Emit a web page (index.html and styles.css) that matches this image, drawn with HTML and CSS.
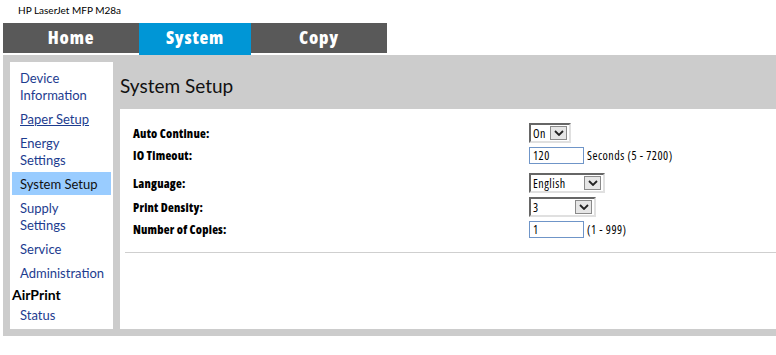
FILE: index.html
```html
<!DOCTYPE html>
<html lang="en">
<head>
<meta charset="utf-8">
<title>System Setup</title>
<link rel="stylesheet" href="styles.css">
</head>
<body>
<div class="title">HP LaserJet MFP M28a</div>
<nav class="tabs">
  <a class="tab">Home</a>
  <a class="tab active">System</a>
  <a class="tab">Copy</a>
</nav>
<div class="panel">
  <aside class="sidebar">
    <a class="item">Device Information</a>
    <a class="item underline">Paper Setup</a>
    <a class="item">Energy Settings</a>
    <a class="item selected">System Setup</a>
    <a class="item">Supply Settings</a>
    <a class="item">Service</a>
    <a class="item">Administration</a>
    <div class="group">AirPrint</div>
    <a class="item">Status</a>
  </aside>
  <main class="content">
    <h1 class="heading">System Setup</h1>
    <section class="card">
      <div class="form">
        <div class="row">
          <span class="label">Auto Continue:</span>
          <span class="field"><span class="select w-on"><span class="val">On</span><span class="arrow"><svg width="10" height="6" viewBox="0 0 10 6"><path d="M1 1 L5 5 L9 1" fill="none" stroke="#222" stroke-width="1.8"/></svg></span></span></span>
        </div>
        <div class="row">
          <span class="label">IO Timeout:</span>
          <span class="field"><span class="input">120</span><span class="hint">Seconds (5 - 7200)</span></span>
        </div>
        <div class="row gap">
          <span class="label">Language:</span>
          <span class="field"><span class="select w-lang"><span class="val">English</span><span class="arrow"><svg width="10" height="6" viewBox="0 0 10 6"><path d="M1 1 L5 5 L9 1" fill="none" stroke="#222" stroke-width="1.8"/></svg></span></span></span>
        </div>
        <div class="row">
          <span class="label">Print Density:</span>
          <span class="field"><span class="select w-dens"><span class="val">3</span><span class="arrow"><svg width="10" height="6" viewBox="0 0 10 6"><path d="M1 1 L5 5 L9 1" fill="none" stroke="#222" stroke-width="1.8"/></svg></span></span></span>
        </div>
        <div class="row">
          <span class="label">Number of Copies:</span>
          <span class="field"><span class="input">1</span><span class="hint">(1 - 999)</span></span>
        </div>
      </div>
      <hr class="rule">
    </section>
  </main>
</div>
</body>
</html>
```
FILE: styles.css
```css
* { box-sizing: border-box; }
html, body { margin: 0; padding: 0; background: #fff; }
body { font-family: Lato, "Open Sans", sans-serif; color: #000; width: 776px; overflow: hidden; }

.title {
  height: 23px;
  padding-left: 18px;
  font-size: 10px;
  line-height: 21px;
}

.tabs {
  display: flex;
  align-items: flex-start;
  margin-left: 3px;
  height: 32px;
}
.tab {
  display: block;
  width: 136px;
  height: 30px;
  line-height: 29px;
  text-align: center;
  background: #595959;
  color: #fff;
  font-family: "Open Sans", sans-serif;
  font-weight: 800;
  font-size: 18px;
  font-stretch: 75%;
  letter-spacing: 0.8px;
}
.tab.active {
  width: 112px;
  height: 32px;
  background: #0096d6;
}

.panel {
  display: flex;
  gap: 7px;
  margin-left: 3px;
  background: #cccccc;
  padding: 7px 0 7px 7px;
}

.sidebar {
  width: 103px;
  flex: none;
  background: #fff;
  padding: 4px 2px 3px;
  display: flex;
  flex-direction: column;
  gap: 1px;
}
.item {
  display: block;
  padding: 4px 8px 2px 8px;
  line-height: 17px;
  font-size: 13px;
  color: #1d3c8f;
}
.item.underline { text-decoration: underline; }
.item.selected { background: #99ccff; color: #111; }
.group {
  font-weight: bold;
  font-size: 14px;
  line-height: 17px;
  padding-top: 1px;
  margin-bottom: -1px;
  color: #000;
}

.content {
  flex: 1;
  display: flex;
  flex-direction: column;
}
.heading {
  margin: 0;
  height: 47px;
  line-height: 47px;
  font-size: 19px;
  font-weight: normal;
  color: #111;
}
.card {
  flex: 1;
  background: #fff;
  padding-top: 14px;
}
.form {
  display: flex;
  flex-direction: column;
  gap: 4px;
  padding-left: 13px;
}
.row {
  display: grid;
  grid-template-columns: 396px auto;
  align-items: center;
}
.row.gap { margin-top: 5px; }
.label {
  font-family: "Open Sans", sans-serif;
  font-weight: 800;
  font-size: 12px;
  font-stretch: 75%;
  letter-spacing: 0.2px;
}
.field {
  display: flex;
  align-items: center;
  gap: 3px;
  font-family: "Open Sans", sans-serif;
  font-size: 12px;
  font-stretch: 75%;
  letter-spacing: 0.5px;
}
.select {
  display: flex;
  align-items: center;
  height: 20px;
  border-style: solid;
  border-width: 2px;
  border-color: #666 #e0e0e0 #e0e0e0 #666;
  background: #fff;
  padding: 0 2px 0 2px;
}
.select .val { flex: 1; }
.select .arrow {
  width: 17px;
  height: 14px;
  background: #e6e6e6;
  border: 1px solid #8a8a8a;
  display: flex;
  align-items: center;
  justify-content: center;
}
.w-on { width: 42px; }
.w-lang { width: 76px; }
.w-dens { width: 67px; }
.input {
  display: block;
  width: 55px;
  height: 17px;
  line-height: 15px;
  border: 1px solid #6f95c8;
  padding-left: 3px;
}

.rule {
  margin: 14px 0 0 5px;
  border: 0;
  border-top: 1px solid #cfcfcf;
  height: 0;
}
```
